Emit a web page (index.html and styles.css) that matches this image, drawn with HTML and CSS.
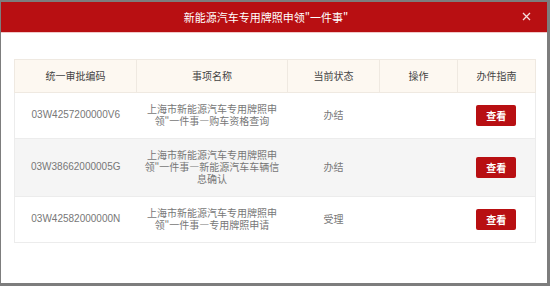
FILE: index.html
```html
<!DOCTYPE html>
<html lang="zh-CN">
<head>
  <meta charset="UTF-8" />
  <title>新能源汽车专用牌照申领“一件事”</title>
  <link rel="stylesheet" href="styles.css">
</head>
<body>

  <div class="mask">
    <div class="dialog">
      <div class="dialog-head">
        <h1>新能源汽车专用牌照申领"一件事"</h1>
        <button class="close-btn" aria-label="关闭">
          <svg width="9" height="9" viewBox="0 0 9 9">
            <path d="M1 1 L8 8 M8 1 L1 8" stroke="#f6dede" stroke-width="1.3" fill="none" />
          </svg>
        </button>
      </div>

      <div class="dialog-body">
        <table class="item-table">
          <thead>
            <tr>
              <th class="col-code">统一审批编码</th>
              <th class="col-name">事项名称</th>
              <th class="col-state">当前状态</th>
              <th class="col-op">操作</th>
              <th class="col-guide">办件指南</th>
            </tr>
          </thead>
          <tbody>
            <tr>
              <td class="code">03W4257200000V6</td>
              <td>上海市新能源汽车专用牌照申领"一件事—购车资格查询</td>
              <td>办结</td>
              <td></td>
              <td><button class="view-btn">查看</button></td>
            </tr>
            <tr class="alt">
              <td class="code">03W38662000005G</td>
              <td>上海市新能源汽车专用牌照申领"一件事—新能源汽车车辆信息确认</td>
              <td>办结</td>
              <td></td>
              <td><button class="view-btn">查看</button></td>
            </tr>
            <tr>
              <td class="code">03W42582000000N</td>
              <td>上海市新能源汽车专用牌照申领"一件事—专用牌照申请</td>
              <td>受理</td>
              <td></td>
              <td><button class="view-btn">查看</button></td>
            </tr>
          </tbody>
        </table>
      </div>
    </div>
  </div>

</body>
</html>
```

FILE: styles.css
```css
html, body {
  height: 100%;
}
body {
  margin: 0;
  background: #7d7d7d;
  font-family: "Microsoft YaHei", "Noto Sans CJK SC", sans-serif;
  color: #777;
}
.mask {
  height: 100%;
  box-sizing: border-box;
  padding: 2px 3px 3px 1px;
}
.dialog {
  height: 100%;
  background: white;
  display: flex;
  flex-direction: column;
}
.dialog-head {
  background: #b80f12;
  height: 30px;
  display: flex;
  align-items: center;
  justify-content: center;
  position: relative;
  border-bottom: 1px solid #f1c9c9;
}
.dialog-head h1 {
  margin: 0;
  padding-right: 16px;
  font-size: 11px;
  font-weight: normal;
  color: #fff;
}
.close-btn {
  position: absolute;
  right: 16px;
  top: 10px;
  width: 9px;
  height: 9px;
  padding: 0;
  border: none;
  background: none;
  display: flex;
  cursor: pointer;
}
.dialog-body {
  padding: 26px 11px 0 13px;
}
.item-table {
  width: 100%;
  border-collapse: collapse;
  border: 1px solid #ececec;
  font-size: 10px;
  line-height: 12px;
  text-align: center;
}
.item-table th {
  background: #fdf8f1;
  color: #444;
  font-weight: normal;
  height: 33px;
  padding: 0 4px;
  border: 1px solid #efe9e1;
  box-sizing: border-box;
}
.col-code { width: 122px; }
.col-name { width: 151px; }
.col-state { width: 92px; }
.col-op { width: 78px; }
.item-table td {
  padding: 10px 8px 11px;
  border-top: 1px solid #ececec;
}
.item-table tr.alt td {
  background: #f5f5f5;
}
.item-table td.code {
  font-family: "Liberation Sans", Arial, sans-serif;
}
.view-btn {
  width: 40px;
  height: 21px;
  padding: 0;
  border: none;
  border-radius: 2px;
  background: #b80f12;
  color: #fff;
  font-family: "Microsoft YaHei", "Noto Sans CJK SC", sans-serif;
  font-size: 10px;
  font-weight: bold;
  cursor: pointer;
}
```
